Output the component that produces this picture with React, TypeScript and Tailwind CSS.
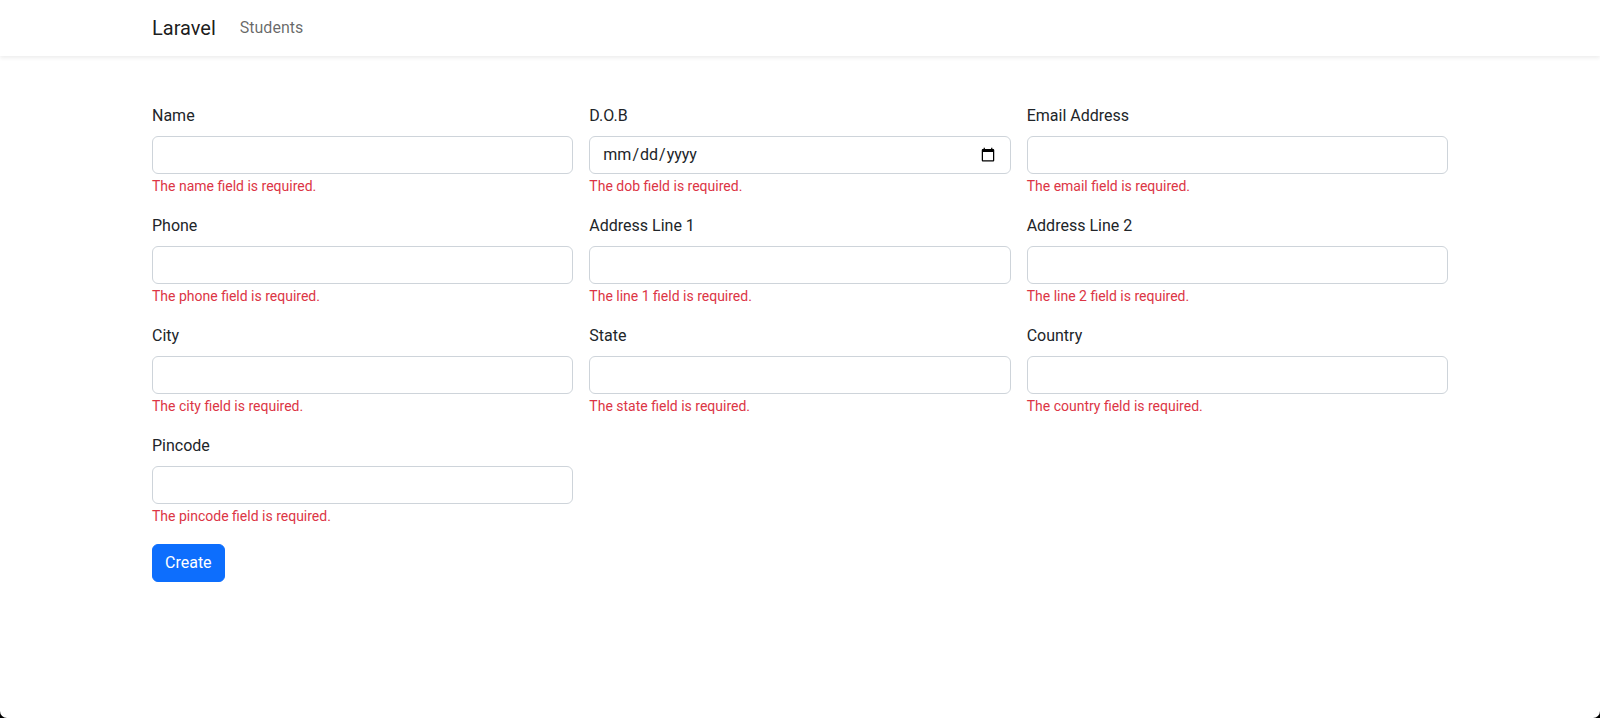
import React from "react";

const fields: { label: string; name: string; type?: string }[] = [
  { label: "Name", name: "name" },
  { label: "D.O.B", name: "dob", type: "date" },
  { label: "Email Address", name: "email" },
  { label: "Phone", name: "phone" },
  { label: "Address Line 1", name: "line 1" },
  { label: "Address Line 2", name: "line 2" },
  { label: "City", name: "city" },
  { label: "State", name: "state" },
  { label: "Country", name: "country" },
  { label: "Pincode", name: "pincode" },
];

export default function App() {
  return (
    <div className="h-[718px] bg-black" style={{ fontFamily: "Roboto, 'Liberation Sans', sans-serif" }}>
      <div className="h-full bg-white rounded-b-[7px] overflow-hidden text-[#212529]">
        <nav className="h-[56px] bg-white shadow-[0_2px_4px_rgba(0,0,0,0.075)] relative">
          <div className="w-[1320px] mx-auto px-[12px] flex items-center h-full">
            <span className="text-[20px] leading-[30px] text-[rgba(0,0,0,0.9)] mr-[16px]">Laravel</span>
            <span className="text-[16px] leading-[24px] text-[rgba(0,0,0,0.6)] px-[8px]">Students</span>
          </div>
        </nav>
        <div className="w-[1320px] mx-auto px-[12px] mt-[48px]">
          <div className="grid grid-cols-3 gap-x-[16px] gap-y-[16px]">
            {fields.map((f) => (
              <div key={f.label}>
                <label className="block text-[16px] leading-[24px] mb-[8px]">{f.label}</label>
                {f.type === "date" ? (
                  <input
                    type="date"
                    className="block w-full h-[38px] border border-[#ced4da] rounded-[6px] px-[12px] text-[16px] text-[#212529] bg-white outline-none"
                    style={{ fontFamily: "Roboto, 'Liberation Sans', sans-serif" }}
                  />
                ) : (
                  <input
                    type="text"
                    className="block w-full h-[38px] border border-[#ced4da] rounded-[6px] px-[12px] text-[16px] bg-white outline-none"
                  />
                )}
                <div className="mt-[2px] mb-[1px] text-[14px] leading-[21px] text-[#dc3545]">
                  The {f.name} field is required.
                </div>
              </div>
            ))}
          </div>
          <button className="mt-[16px] h-[38px] px-[12px] border border-[#0d6efd] bg-[#0d6efd] text-white text-[16px] leading-[24px] rounded-[6px]">
            Create
          </button>
        </div>
      </div>
    </div>
  );
}
